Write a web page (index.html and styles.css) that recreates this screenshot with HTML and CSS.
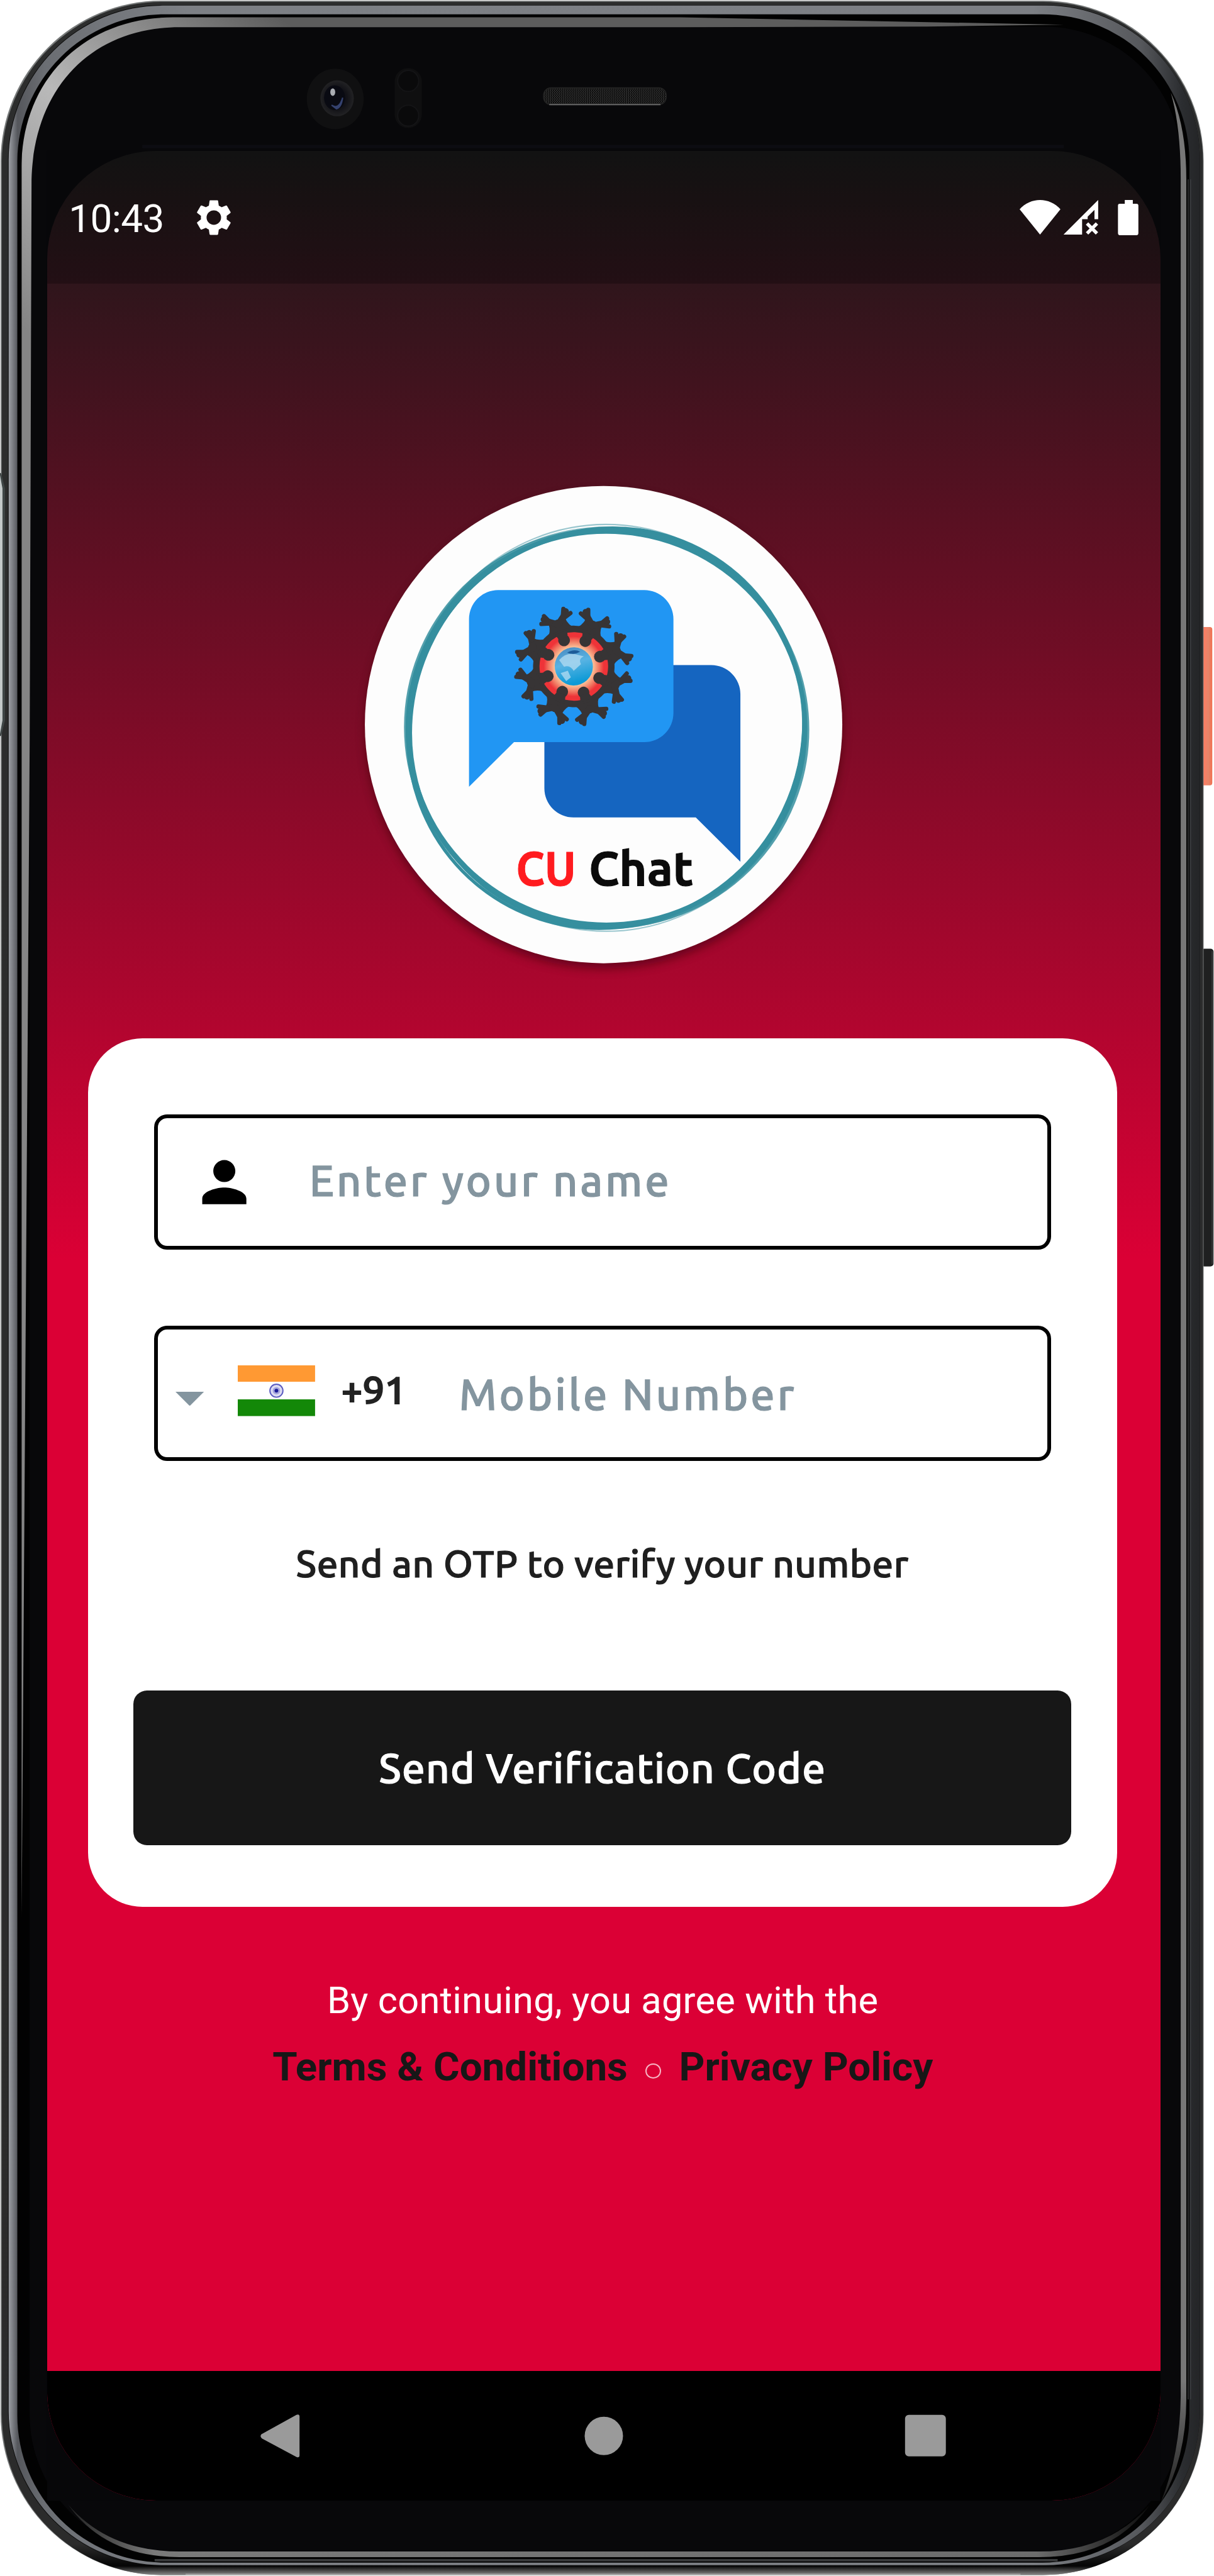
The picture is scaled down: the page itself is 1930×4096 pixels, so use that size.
FILE: index.html
```html
<!DOCTYPE html>
<html lang="en">
<head>
<meta charset="utf-8">
<title>CU Chat</title>
<link rel="stylesheet" href="styles.css">
</head>
<body>
<div class="phone">
  <svg class="frame" viewBox="0 0 1963 4165" aria-hidden="true">
    <defs>
      <linearGradient id="shell" x1="0" y1="0" x2="0" y2="1">
        <stop offset="0" stop-color="#2c2d2d"/><stop offset=".988" stop-color="#2b2b2b"/>
        <stop offset=".9965" stop-color="#050505"/><stop offset="1" stop-color="#8a8a8a"/>
      </linearGradient>
      <linearGradient id="rim" x1="0" y1="0" x2="1" y2="0">
        <stop offset="0" stop-color="#9b9ea4"/><stop offset=".0075" stop-color="#55575c"/>
        <stop offset=".03" stop-color="#6b6e73"/><stop offset=".15" stop-color="#7d8085"/>
        <stop offset=".86" stop-color="#7c7f84"/><stop offset=".95" stop-color="#56585c"/>
        <stop offset=".985" stop-color="#2b2d30"/><stop offset="1" stop-color="#242527"/>
      </linearGradient>
      <linearGradient id="glare" gradientUnits="userSpaceOnUse" x1="0" y1="500" x2="420" y2="0">
        <stop offset="0" stop-color="#858585"/><stop offset=".5" stop-color="#b9b9b9"/>
        <stop offset="1" stop-color="#5d5d5d"/>
      </linearGradient>
      <linearGradient id="fall" gradientUnits="userSpaceOnUse" x1="0" y1="3850" x2="0" y2="4040">
        <stop offset="0" stop-color="#777"/><stop offset="1" stop-color="#222"/>
      </linearGradient>
      <linearGradient id="base" gradientUnits="userSpaceOnUse" x1="110" y1="0" x2="1850" y2="0">
        <stop offset="0" stop-color="#222"/><stop offset=".08" stop-color="#7a7a7a"/>
        <stop offset=".9" stop-color="#6c6c6c"/><stop offset="1" stop-color="#111"/>
      </linearGradient>
      <linearGradient id="power" x1="0" y1="0" x2="1" y2="0">
        <stop offset="0" stop-color="#d9603f"/><stop offset=".25" stop-color="#ff7d62"/>
        <stop offset=".65" stop-color="#e8866a"/><stop offset="1" stop-color="#f26f50"/>
      </linearGradient>
      <radialGradient id="lens">
        <stop offset="0" stop-color="#0b0c16"/><stop offset=".6" stop-color="#121217"/>
        <stop offset="1" stop-color="#222224"/>
      </radialGradient>
      <pattern id="mesh" width="6" height="8" patternUnits="userSpaceOnUse">
        <rect width="6" height="8" fill="#060606"/>
        <path d="M1 0l2 2-2 2 2 2-2 2M4 0l2 2-2 2 2 2-2 2" stroke="#4a4a4a" fill="none"/>
      </pattern>
    </defs>
    <rect x="1942" y="1014" width="18" height="256" rx="4" fill="url(#power)"/>
    <rect x="1942" y="1534" width="20" height="514" rx="5" fill="#1f2020"/>
    <path d="M1960 1538v506" stroke="#3b3c3c" stroke-width="2"/>
    <rect x="1" y="1" width="1945" height="4163" rx="260" fill="#777a7a"/>
    <rect x="3" y="3" width="1942" height="4161" rx="259" fill="url(#shell)"/>
    <path d="M0 765h2l6 25v375l-6 25H0z" fill="#3f4646"/>
    <path d="M0 768l4 22v375l-4 22z" fill="#c4caca"/>
    <rect x="13" y="8" width="1927" height="4141" rx="250" fill="#0b0b0b"/>
    <rect x="14" y="9" width="1926" height="4139" rx="249" fill="url(#rim)"/>
    <rect x="28" y="23" width="1895" height="4121" rx="238" fill="#020202"/>
    <path d="M250 4140h1460" stroke="#3a3b3d" stroke-width="4"/>
    <rect x="48" y="43" width="1862" height="4084" rx="222" fill="#08080a"/>
    <path d="M35 3100V270C35 130 135 28 280 28H1100L1720 40 1500 43 1100 44H290C150 44 55 140 51 290L48 1200z" fill="url(#glare)"/>
    <path d="M1893 150Q1918 205 1918 290V3880Q1918 3975 1877 4046Q1909 3965 1909 3870V290Q1909 205 1893 150z" fill="url(#fall)"/>
    <path d="M1921 290V3880M1925 290V3880" stroke="#3a3c3f" stroke-width="1.5"/>
    <path d="M110 4050Q175 4126 290 4126H1680Q1790 4126 1858 4052Q1800 4135 1680 4135H290Q170 4135 110 4050z" fill="url(#base)"/>
    <path d="M300 4163H1650" stroke="#aaa" stroke-width="2"/>
    <path d="M76 243.500H1876V4044H76z" fill="#070709"/>
    <path d="M230 237h1490" stroke="#0c0c12" stroke-width="5"/>
    <ellipse cx="542" cy="160" rx="46" ry="49" fill="#101011"/>
    <ellipse cx="545" cy="159" rx="27" ry="29" fill="url(#lens)"/>
    <ellipse cx="541" cy="158" rx="17" ry="20" fill="#090a12"/>
    <path d="M536 170q12 8 18-12-2 16-10 18z" fill="#34416e" stroke="#34416e" stroke-width="2"/>
    <ellipse cx="538" cy="149" rx="4" ry="6" fill="#a9acb2"/>
    <rect x="638" y="110" width="44" height="97" rx="22" fill="#0f0f10"/>
    <circle cx="660" cy="131" r="17" fill="#0a0a0b" stroke="#141416" stroke-width="2"/>
    <circle cx="660" cy="187" r="17" fill="#0a0a0b" stroke="#141416" stroke-width="2"/>
    <rect x="879" y="142" width="198" height="27" rx="12" fill="url(#mesh)" stroke="#222" stroke-width="2"/>
    <path d="M888 169h180" stroke="#666" stroke-width="2"/>
  </svg>

  <div class="screen">
    <header class="status">
      <span class="clock">10:43</span>
      <svg class="gear" viewBox="0 0 24 24"><path fill="#fff" d="M19.430 12.980c.040-.320.070-.640.070-.980s-.030-.660-.070-.980l2.110-1.650c.190-.150.240-.420.120-.640l-2-3.460c-.120-.220-.390-.300-.610-.220l-2.490 1c-.520-.400-1.080-.730-1.690-.980l-.380-2.650C14.460 2.180 14.250 2 14 2h-4c-.250 0-.460.180-.490.420l-.380 2.650c-.610.250-1.170.590-1.690.980l-2.490-1c-.230-.090-.490 0-.610.220l-2 3.460c-.130.220-.070.490.120.640l2.110 1.650c-.040.320-.070.650-.070.980s.030.660.070.980l-2.110 1.650c-.190.150-.240.420-.120.640l2 3.460c.120.220.390.300.610.220l2.490-1c.520.400 1.080.730 1.690.980l.380 2.650c.030.240.240.420.490.420h4c.250 0 .460-.180.490-.420l.380-2.650c.610-.250 1.170-.590 1.690-.980l2.490 1c.230.090.490 0 .610-.220l2-3.460c.120-.220.070-.490-.120-.640zM12 16.200A4.200 4.200 0 1 1 12 7.800a4.200 4.200 0 0 1 0 8.400z"/></svg>
      <svg class="signals" viewBox="0 0 192 57">
        <g fill="#fff">
          <path d="M0 15C18-5 48-5 66 15L33 56z"/>
          <path d="M71 56L127 0V31H121V16L110 27V31H101V56z"/>
          <path d="M170 0h13v6h6q3 0 3 3v45q0 3-3 3h-27q-3 0-3-3V9q0-3 3-3h8z"/>
        </g>
        <path d="M109 38l16 16M125 38l-16 16" stroke="#fff" stroke-width="5.500"/>
      </svg>
    </header>

    <main class="content">
      <svg class="logo" viewBox="0 0 1568 1568" role="img" aria-label="CU Chat">
        <defs>
          <filter id="lift" x="-10%" y="-10%" width="120%" height="125%"><feGaussianBlur stdDeviation="16"/></filter>
          <radialGradient id="core"><stop offset=".5" stop-color="#fbc59a"/><stop offset=".68" stop-color="#f0745f"/><stop offset=".8" stop-color="#ee3338"/></radialGradient>
          <linearGradient id="globe" x1="0" y1="0" x2=".3" y2="1"><stop offset="0" stop-color="#4a86bd"/><stop offset=".5" stop-color="#58b3e3"/><stop offset="1" stop-color="#0d9ad6"/></linearGradient>
          <g id="figure">
            <circle cx="0" cy="-86" r="18"/>
            <path d="M-14-92H14L20-112H-20z"/>
            <path d="M-48-108Q0-130 48-108Q28-124 27-150L0-154-27-150Q-28-124-48-108z"/>
            <path d="M0-138L-30-160L-36-168M0-138L30-160L36-168" fill="none" stroke="#373435" stroke-width="20" stroke-linecap="round" stroke-linejoin="round"/>
            <path d="M-20-152L-32-178M-22-150L-48-158M20-152L32-178M22-150L48-158" fill="none" stroke="#373435" stroke-width="13" stroke-linecap="round"/>
          </g>
        </defs>
        <circle cx="778" cy="806" r="736" fill="#35000f" opacity=".55" filter="url(#lift)"/>
        <circle cx="777" cy="788" r="738" fill="#fdfdfd"/>
        <g fill="none" stroke="#368f9f">
          <ellipse cx="786" cy="799" rx="614" ry="608" stroke-width="14"/>
          <ellipse cx="781" cy="796" rx="617" ry="612" stroke-width="8" opacity=".85"/>
          <ellipse cx="791" cy="803" rx="618" ry="612" stroke-width="8" opacity=".85"/>
          <ellipse cx="784" cy="802" rx="604" ry="624" stroke-width="10" transform="rotate(40 784 802)"/>
          <ellipse cx="788" cy="796" rx="602" ry="622" stroke-width="8" transform="rotate(30 788 796)"/>
          <ellipse cx="786" cy="798" rx="617" ry="620" stroke-width="5" opacity=".6"/>
          <ellipse cx="785" cy="798" rx="608" ry="629" stroke-width="4" opacity=".5"/>
        </g>
        <path fill="#1565c0" d="M594 604H1110A90 90 0 0 1 1200 694V1212L1062 1075H684A90 90 0 0 1 594 985z"/>
        <path fill="#2196f3" d="M451 372H903A90 90 0 0 1 993 462V752A90 90 0 0 1 903 842H500L361 980V462A90 90 0 0 1 451 372z"/>
        <g transform="translate(685 608) rotate(2)">
          <circle r="116" fill="url(#core)" stroke="#373435" stroke-width="20"/>
          <g fill="#373435">
            <use href="#figure" transform="rotate(22.500)"/><use href="#figure" transform="rotate(67.500)"/>
            <use href="#figure" transform="rotate(112.500)"/><use href="#figure" transform="rotate(157.500)"/>
            <use href="#figure" transform="rotate(202.500)"/><use href="#figure" transform="rotate(247.500)"/>
            <use href="#figure" transform="rotate(292.500)"/><use href="#figure" transform="rotate(337.500)"/>
          </g>
          <circle r="59" fill="url(#globe)"/>
          <path d="M-46-18q20-26 50-20l26 6q-18 8-8 24l-22 22q-12-20-30-12zM-40 22l22-8 10 20-14 12z" fill="#b5dcf2" opacity=".75"/>
          <path d="M-22-42q22-14 40-4-18 12-40 4z" fill="#1d5b98"/>
        </g>
        <g class="brand">
          <text x="506" y="1286" textLength="186" lengthAdjust="spacingAndGlyphs" fill="#ff1b1f" stroke="#ff1b1f">CU</text>
          <text x="731" y="1286" textLength="324" lengthAdjust="spacingAndGlyphs" fill="#0b0b0b" stroke="#0b0b0b">Chat</text>
        </g>
      </svg>

      <section class="card">
        <div class="field name">
          <svg class="person" viewBox="0 0 24 24"><path d="M12 12c2.210 0 4-1.790 4-4s-1.790-4-4-4-4 1.790-4 4 1.790 4 4 4zm0 2c-2.670 0-8 1.340-8 4v2h16v-2c0-2.660-5.330-4-8-4z"/></svg>
          <span class="hint hint-name">Enter your name</span>
        </div>
        <div class="field mobile">
          <svg class="caret" viewBox="0 0 46 23"><path d="M0 0h46L23 23z" fill="#84959f"/></svg>
          <svg class="flag" viewBox="0 0 125 82">
            <rect width="125" height="82" fill="#fff"/>
            <rect width="125" height="26.500" fill="#ff9933"/><rect y="55" width="125" height="27" fill="#138808"/>
            <circle cx="62.500" cy="41" r="10.500" fill="#dcdcf2" stroke="#5a5ac0" stroke-width="2"/>
            <circle cx="62.500" cy="41" r="6" fill="#a4a4dc"/><circle cx="62.500" cy="41" r="3" fill="#1a1a98"/>
          </svg>
          <span class="code">+91</span>
          <span class="hint hint-mobile">Mobile Number</span>
        </div>
        <p class="note">Send an OTP to verify your number</p>
        <div class="button">Send Verification Code</div>
      </section>

      <footer class="legal">
        <p class="agree">By continuing, you agree with the</p>
        <p class="links"><span class="terms">Terms &amp; Conditions</span><i class="dot"></i><span class="privacy">Privacy Policy</span></p>
      </footer>
    </main>

    <nav class="nav">
      <svg viewBox="0 0 1800 210">
        <g fill="#9a9a9a">
          <path d="M403 71q5-2 5 3v62q0 5-5 3L347 109q-4-4 0-7z"/>
          <circle cx="900" cy="105" r="31"/>
          <rect x="1387" y="71" width="66" height="67" rx="6"/>
        </g>
      </svg>
    </nav>
  </div>
</div>
</body>
</html>
```
FILE: styles.css
```css
html, body {
  margin: 0;
  background: #fff;
}

body {
  overflow: hidden;
}

p {
  margin: 0;
}

svg {
  display: block;
  flex: none;
}

/* All lengths are in device-art pixels (1963 x 4165). */
.phone {
  zoom: 0.9833;
  display: grid;
  width: 1963px;
  height: 4165px;
  font-family: Ubuntu, "Noto Sans", sans-serif;
}

.frame,
.screen {
  grid-area: 1 / 1;
}

.frame {
  width: 1963px;
  height: 4165px;
}

.screen {
  display: flex;
  flex-direction: column;
  width: 1800px;
  height: 3800px;
  margin: 244px 0 0 76px;
  border-radius: 176px;
  overflow: hidden;
  background: linear-gradient(#181818 0, #db0035 1795px);
}

.status {
  display: flex;
  align-items: center;
  box-sizing: border-box;
  height: 215px;
  padding: 0 35px 0 35px;
  background: rgba(0, 0, 0, 0.25);
  color: #fff;
}

.clock {
  width: 155px;
  padding-top: 5px;
  font: 400 63px/80px Roboto, sans-serif;
  letter-spacing: -0.5px;
  white-space: nowrap;
}

.gear {
  width: 67px;
  height: 67px;
  margin-left: 46px;
}

.signals {
  width: 192px;
  height: 57px;
  margin-left: auto;
}

.content {
  height: 3375px;
}

.logo {
  width: 820px;
  height: 820px;
  margin: 301px 0 0 494px;
  overflow: visible;
}

.brand {
  font-family: Ubuntu, "Noto Sans", sans-serif;
  font-size: 146px;
  font-weight: 700;
  stroke-width: 2px;
}

.card {
  display: flex;
  flex-direction: column;
  box-sizing: border-box;
  width: 1664px;
  height: 1405px;
  margin: 99px 0 0 66px;
  padding: 123px 74px 100px;
  border-radius: 88px;
  background: #fff;
}

.field {
  display: flex;
  align-items: center;
  box-sizing: border-box;
  width: 1450px;
  height: 219px;
  margin-left: 33px;
  border: 6.2px solid #000;
  border-radius: 21px;
}

.mobile {
  margin-top: 123px;
}

.person {
  width: 107px;
  height: 107px;
  margin-left: 54px;
}

.hint {
  color: #84959f;
  font-size: 69.5px;
  font-weight: 500;
  line-height: 90px;
  white-space: nowrap;
  -webkit-text-stroke: 1.2px #84959f;
}

.hint-name {
  margin-left: 84px;
  padding-bottom: 4px;
  letter-spacing: 4px;
}

.caret {
  width: 46px;
  height: 23px;
  margin: 17px 0 0 29px;
}

.flag {
  width: 125px;
  height: 82px;
  margin: 0 0 9px 54px;
}

.code {
  width: 110px;
  margin-left: 42px;
  padding-bottom: 11px;
  color: #222;
  font-size: 64px;
  font-weight: 700;
  line-height: 90px;
  letter-spacing: -1px;
}

.hint-mobile {
  margin-left: 81px;
  padding-top: 2px;
  letter-spacing: 4px;
}

.note {
  margin-top: 121px;
  color: #1f1f1f;
  font-size: 61px;
  font-weight: 500;
  line-height: 90px;
  letter-spacing: 0.5px;
  text-align: center;
  white-space: nowrap;
  -webkit-text-stroke: 1.2px #1f1f1f;
}

.button {
  height: 250px;
  margin-top: 160px;
  border-radius: 22px;
  background: #171717;
  color: #fff;
  font-size: 66.5px;
  font-weight: 500;
  line-height: 251px;
  letter-spacing: 1.3px;
  text-align: center;
  white-space: nowrap;
  -webkit-text-stroke: 1.2px #fff;
}

.legal {
  margin-top: 106px;
  padding-right: 3px;
  font-family: Roboto, sans-serif;
}

.agree {
  color: #fff;
  font-size: 60.5px;
  line-height: 90px;
  letter-spacing: 0.3px;
  text-align: center;
}

.links {
  display: flex;
  align-items: center;
  justify-content: center;
  margin-top: 18px;
  color: #171717;
  font-size: 64.8px;
  font-weight: 700;
  line-height: 90px;
  white-space: nowrap;
}

.dot {
  box-sizing: border-box;
  width: 25px;
  height: 25px;
  margin: 12px 29px 0;
  border: 2.5px solid #f7b3c3;
  border-radius: 50%;
}

.nav {
  height: 210px;
  background: #000;
}

.nav svg {
  width: 1800px;
  height: 210px;
}
```
